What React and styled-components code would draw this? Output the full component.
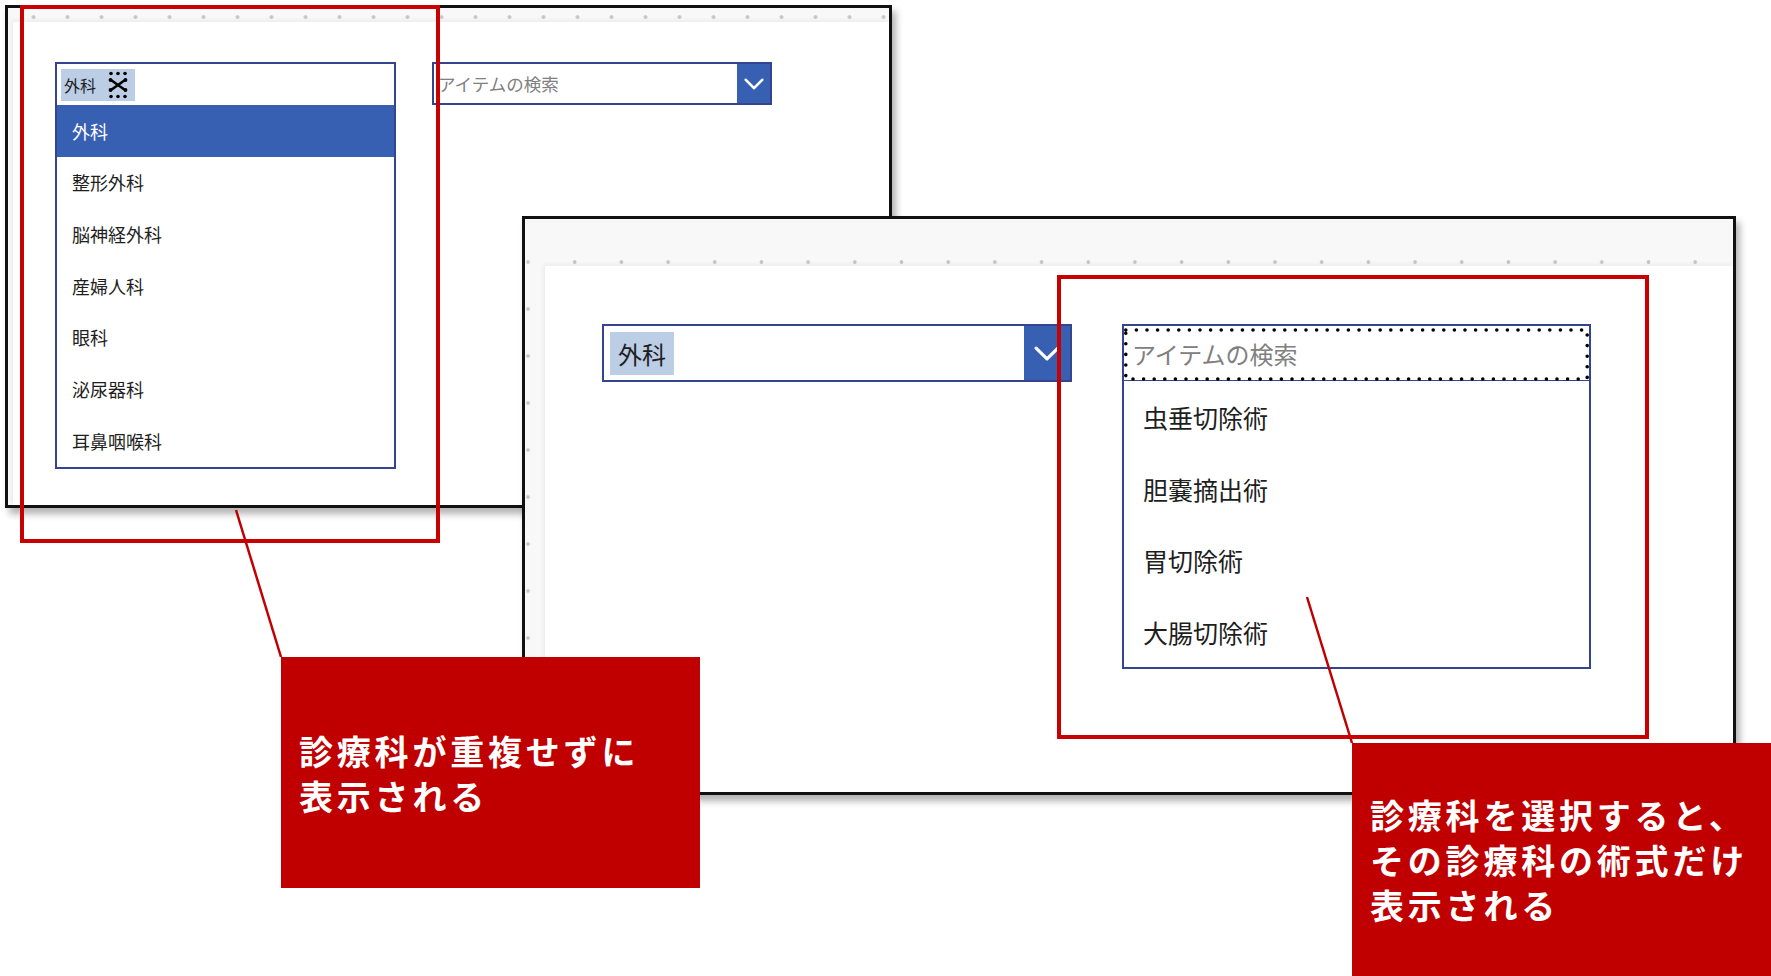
import React from "react";
import styled, { createGlobalStyle } from "styled-components";

const GlobalStyle = createGlobalStyle`
  html, body { margin: 0; padding: 0; background: #ffffff; }
  body { font-family: "Noto Sans CJK JP", "Noto Sans", sans-serif; }
  #root { width: 1771px; height: 976px; overflow: hidden; }
`;

const FONT = `"Noto Sans CJK JP", "Noto Sans", sans-serif`;
const NAVY = "#34448f";
const BLUE = "#3860b2";
const CHIP = "#bccde6";
const RED = "#c00000";

const Stage = styled.div`
  position: relative;
  width: 1771px;
  height: 976px;
  overflow: hidden;
  background: #ffffff;
  font-family: ${FONT};
`;

/* ---------- screenshot windows (placed on a free canvas) ---------- */
const Window = styled.div`
  position: absolute;
  left: ${(p) => p.$x}px;
  top: ${(p) => p.$y}px;
  width: ${(p) => p.$w}px;
  height: ${(p) => p.$h}px;
  box-sizing: border-box;
  border: 3px solid #111;
  background: #f8f8f8;
  box-shadow: 4px 6px 7px rgba(0, 0, 0, 0.3);
  display: grid;
  grid-template-columns: ${(p) => p.$side}px 1fr;
  grid-template-rows: ${(p) => p.$top}px 1fr;
  overflow: hidden;
`;

const TopRuler = styled.div`
  grid-column: 1 / -1;
  background-color: #f8f8f8;
  background-image: radial-gradient(circle, #c6c6c6 0 1.5px, transparent 2.2px);
  background-size: ${(p) => p.$step}px ${(p) => p.$tile}px;
  background-position: ${(p) => p.$ox}px 0;
  background-repeat: repeat-x;
`;

const LeftRuler = styled.div`
  background-color: #f8f8f8;
  background-image: ${(p) =>
    p.$dots ? "radial-gradient(circle, #c6c6c6 0 1.5px, transparent 2.2px)" : "none"};
  background-size: 20px ${(p) => p.$step}px;
  background-position: ${(p) => p.$ox}px ${(p) => p.$oy}px;
  background-repeat: repeat-y;
`;

const Canvas = styled.div`
  background: #ffffff;
  box-shadow: -2px -2px 4px rgba(0, 0, 0, 0.05);
  display: flex;
  align-items: flex-start;
  gap: ${(p) => p.$gap}px;
  padding: ${(p) => p.$pt}px 0 0 ${(p) => p.$pl}px;
`;

/* ---------- controls ---------- */
const ListBox = styled.div`
  box-sizing: border-box;
  width: ${(p) => p.$w}px;
  border: 2px solid ${NAVY};
  background: #fff;
  display: flex;
  flex-direction: column;
`;

const ListHeader = styled.div`
  position: relative;
  height: ${(p) => p.$h}px;
  display: flex;
  align-items: center;
  padding-left: ${(p) => p.$pl}px;
  border-bottom: ${(p) => (p.$line ? `1px solid ${NAVY}` : "none")};
  box-sizing: border-box;
`;

const Option = styled.div`
  height: ${(p) => p.$h}px;
  box-sizing: border-box;
  display: flex;
  align-items: center;
  padding-left: ${(p) => p.$pl}px;
  padding-top: ${(p) => p.$pt || 0}px;
  font-size: ${(p) => p.$fs}px;
  color: ${(p) => (p.$selected ? "#ffffff" : "#1e1e1e")};
  background: ${(p) => (p.$selected ? BLUE : "transparent")};
  white-space: nowrap;
`;

const Field = styled.div`
  box-sizing: border-box;
  width: ${(p) => p.$w}px;
  height: ${(p) => p.$h}px;
  border: 2px solid ${NAVY};
  background: #fff;
  display: flex;
  align-items: center;
`;

const FieldBody = styled.div`
  flex: 1;
  display: flex;
  align-items: center;
  padding-left: ${(p) => p.$pl}px;
  min-width: 0;
`;

const Placeholder = styled.span`
  font-size: ${(p) => p.$fs}px;
  color: #808080;
  white-space: nowrap;
`;

const Chip = styled.span`
  display: inline-flex;
  align-items: center;
  gap: ${(p) => p.$gap || 0}px;
  height: ${(p) => p.$h}px;
  padding: 0 ${(p) => p.$pr}px 0 ${(p) => p.$pl}px;
  background: ${CHIP};
  font-size: ${(p) => p.$fs}px;
  color: #1e1e1e;
  white-space: nowrap;
`;

const ChevronButton = styled.div`
  align-self: stretch;
  width: ${(p) => p.$w}px;
  background: ${BLUE};
  display: flex;
  align-items: center;
  justify-content: center;
`;

const FocusRing = styled.svg`
  position: absolute;
  left: 0;
  top: 0;
  pointer-events: none;
`;

/* ---------- annotations ---------- */
const Frame = styled.div`
  position: absolute;
  left: ${(p) => p.$x}px;
  top: ${(p) => p.$y}px;
  width: ${(p) => p.$w}px;
  height: ${(p) => p.$h}px;
  box-sizing: border-box;
  border: 4px solid #c80000;
  pointer-events: none;
`;

const Callout = styled.div`
  position: absolute;
  left: ${(p) => p.$x}px;
  top: ${(p) => p.$y}px;
  width: ${(p) => p.$w}px;
  height: ${(p) => p.$h}px;
  box-sizing: border-box;
  background: ${RED};
  color: #ffffff;
  display: flex;
  align-items: center;
  padding-left: 18px;
  font-family: ${FONT};
  font-weight: 700;
  font-size: 34px;
  line-height: 45px;
  letter-spacing: 3.8px;
`;

const Leaders = styled.svg`
  position: absolute;
  left: 0;
  top: 0;
  pointer-events: none;
`;

/* ---------- icons ---------- */
const Chevron = ({ w, h, sw }) => (
  <svg width={w} height={h} viewBox={`0 0 ${w} ${h}`}>
    <polyline
      points={`${sw / 2 + 0.5},${sw / 2 + 0.5} ${w / 2},${h - sw / 2 - 0.5} ${w - sw / 2 - 0.5},${sw / 2 + 0.5}`}
      fill="none"
      stroke="#ffffff"
      strokeWidth={sw}
      strokeLinecap="round"
      strokeLinejoin="round"
    />
  </svg>
);

const RemoveIcon = () => (
  <svg width="20" height="28" viewBox="0 0 20 28">
    {[3, 10, 17].map((x) => (
      <React.Fragment key={x}>
        <circle cx={x} cy="2.5" r="1.8" fill="#000" />
        <circle cx={x} cy="25.5" r="1.8" fill="#000" />
      </React.Fragment>
    ))}
    <path d="M3 9 L17 19 M17 9 L3 19" stroke="#000" strokeWidth="2.6" strokeLinecap="round" />
    <circle cx="2.5" cy="9" r="1.9" fill="#000" />
    <circle cx="17.5" cy="9" r="1.9" fill="#000" />
    <circle cx="2.5" cy="19" r="1.9" fill="#000" />
    <circle cx="17.5" cy="19" r="1.9" fill="#000" />
  </svg>
);

const departments = ["外科", "整形外科", "脳神経外科", "産婦人科", "眼科", "泌尿器科", "耳鼻咽喉科"];
const procedures = ["虫垂切除術", "胆嚢摘出術", "胃切除術", "大腸切除術"];

export default function App() {
  return (
    <Stage>
      <GlobalStyle />

      {/* Screenshot 1: department dropdown open */}
      <Window $x={5} $y={5} $w={887} $h={503} $side={5} $top={14}>
        <TopRuler $step={34} $tile={18} $ox={8.5} />
        <LeftRuler $dots={false} $step={34} $ox={0} $oy={0} />
        <Canvas $pl={42} $pt={40} $gap={36}>
          <ListBox $w={341}>
            <ListHeader $h={41} $pl={4}>
              <Chip $h={32} $fs={16} $pl={3} $pr={7} $gap={12}>
                外科
                <RemoveIcon />
              </Chip>
            </ListHeader>
            {departments.map((d, i) => (
              <Option key={d} $h={51.67} $pl={15} $fs={18} $selected={i === 0}>
                {d}
              </Option>
            ))}
          </ListBox>
          <Field $w={340} $h={43}>
            <FieldBody $pl={4}>
              <Placeholder $fs={17.5}>アイテムの検索</Placeholder>
            </FieldBody>
            <ChevronButton $w={33}>
              <Chevron w={20} h={12} sw={2.6} />
            </ChevronButton>
          </Field>
        </Canvas>
      </Window>

      <Frame $x={20} $y={5} $w={420} $h={538} />

      {/* Screenshot 2: procedures filtered by department */}
      <Window $x={522} $y={216} $w={1214} $h={579} $side={20} $top={47}>
        <TopRuler $step={46.7} $tile={86} $ox={-20.35} />
        <LeftRuler $dots $step={47} $ox={-7} $oy={19.5} />
        <Canvas $pl={57} $pt={58} $gap={50}>
          <Field $w={470} $h={58}>
            <FieldBody $pl={6}>
              <Chip $h={43} $fs={24} $pl={8} $pr={8}>
                外科
              </Chip>
            </FieldBody>
            <ChevronButton $w={46}>
              <Chevron w={26} h={15} sw={3.2} />
            </ChevronButton>
          </Field>
          <ListBox $w={469}>
            <ListHeader $h={55} $pl={8} $line>
              <Placeholder $fs={24}>アイテムの検索</Placeholder>
              <FocusRing width="465" height="55" viewBox="0 0 465 55">
                <rect
                  x="1.8"
                  y="4"
                  width="461.4"
                  height="49"
                  fill="none"
                  stroke="#000"
                  strokeWidth="3.6"
                  strokeLinecap="round"
                  strokeDasharray="0 10.6"
                />
              </FocusRing>
            </ListHeader>
            {procedures.map((p) => (
              <Option key={p} $h={71.5} $pl={19} $pt={1} $fs={25}>
                {p}
              </Option>
            ))}
          </ListBox>
        </Canvas>
      </Window>

      <Frame $x={1057} $y={275} $w={592} $h={464} />

      <Leaders width="1771" height="976" viewBox="0 0 1771 976">
        <line x1="236" y1="510" x2="281" y2="657" stroke={RED} strokeWidth="2.5" />
        <line x1="1307" y1="597" x2="1352" y2="743" stroke={RED} strokeWidth="2.5" />
      </Leaders>

      <Callout $x={281} $y={657} $w={419} $h={231}>
        <div>
          診療科が重複せずに
          <br />
          表示される
        </div>
      </Callout>

      <Callout $x={1352} $y={743} $w={419} $h={233}>
        <div>
          診療科を選択すると、
          <br />
          その診療科の術式だけ
          <br />
          表示される
        </div>
      </Callout>
    </Stage>
  );
}
